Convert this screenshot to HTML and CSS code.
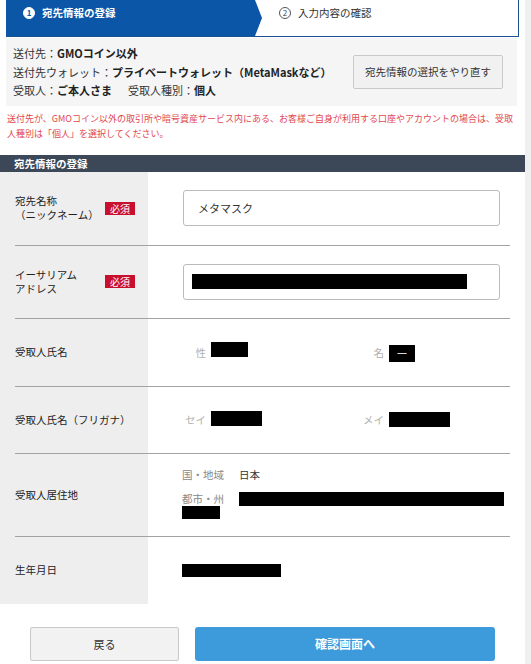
FILE: index.html
```html
<!DOCTYPE html>
<html lang="ja">
<head>
    <meta charset="UTF-8">
    <meta name="viewport" content="width=device-width, initial-scale=1.0">
    <title>宛先情報の登録</title>
    <link rel="stylesheet" href="styles.css">
</head>
<body>
<div class="page">

    <ol class="steps">
        <li class="step step--current"><span class="step-num">1</span>宛先情報の登録</li>
        <li class="step"><span class="step-num">2</span>入力内容の確認</li>
    </ol>

    <div class="summary">
        <div class="summary-list">
            <p>送付先：<b>GMOコイン以外</b></p>
            <p>送付先ウォレット：<b>プライベートウォレット（MetaMaskなど）</b></p>
            <p>受取人：<b>ご本人さま</b><span class="spacer"></span>受取人種別：<b>個人</b></p>
        </div>
        <button class="btn-reselect">宛先情報の選択をやり直す</button>
    </div>

    <p class="note">送付先が、GMOコイン以外の取引所や暗号資産サービス内にある、お客様ご自身が利用する口座やアカウントの場合は、受取<br>人種別は「個人」を選択してください。</p>

    <h2 class="section-title">宛先情報の登録</h2>

    <div class="form">
        <div class="row row--nickname">
            <div class="label">
                <span class="label-text">宛先名称<br>（ニックネーム）</span>
                <span class="badge">必須</span>
            </div>
            <div class="value">
                <input class="text-input" type="text" value="メタマスク">
            </div>
        </div>

        <div class="row row--address">
            <div class="label">
                <span class="label-text">イーサリアム<br>アドレス</span>
                <span class="badge">必須</span>
            </div>
            <div class="value">
                <div class="text-input"><span class="redact" style="width: 275px; height: 15px;"></span></div>
            </div>
        </div>

        <div class="row row--name">
            <div class="label">受取人氏名</div>
            <div class="value name-grid">
                <div class="name-field"><span class="name-key">性</span><span class="redact" style="width: 37px; height: 15px; margin-top: -5px;"></span></div>
                <div class="name-field"><span class="name-key">名</span><span class="redact redact--dash" style="width: 26px; height: 17px; margin-top: 3px;">一</span></div>
            </div>
        </div>

        <div class="row row--kana">
            <div class="label">受取人氏名（フリガナ）</div>
            <div class="value name-grid">
                <div class="name-field"><span class="name-key">セイ</span><span class="redact" style="width: 51px; height: 15px; margin-top: -3px;"></span></div>
                <div class="name-field"><span class="name-key">メイ</span><span class="redact" style="width: 61px; height: 15px; margin-top: -1px;"></span></div>
            </div>
        </div>

        <div class="row row--home">
            <div class="label">受取人居住地</div>
            <div class="value">
                <div class="address">
                    <div class="address-line"><span class="address-key">国・地域</span><span>日本</span></div>
                    <div class="address-line address-line--city"><span class="address-key">都市・州</span><span class="redact" style="width: 265px; height: 14px;"></span></div>
                    <span class="redact" style="width: 38px; height: 13px;"></span>
                </div>
            </div>
        </div>

        <div class="row row--birth">
            <div class="label">生年月日</div>
            <div class="value">
                <span class="redact" style="width: 99px; height: 13px;"></span>
            </div>
        </div>
    </div>

    <div class="actions">
        <button class="btn btn-back">戻る</button>
        <button class="btn btn-next">確認画面へ</button>
    </div>

</div>
</body>
</html>
```

FILE: styles.css
```css
body {
    margin: 0;
    background-color: #efefef;
    font-family: "Noto Sans CJK JP", "Noto Sans", sans-serif;
    color: #333;
}
p {
    margin: 0;
}
.page {
    width: 525px;
    min-height: 664px;
    background-color: #fff;
}

/* ステップ */
.steps {
    display: flex;
    list-style: none;
    margin: 0 0 0 6px;
    padding: 0;
    width: 513px;
    height: 37px;
    box-sizing: border-box;
    border-bottom: 1px solid #1b5291;
    border-right: 1px solid #1b5291;
}
.step {
    display: flex;
    align-items: center;
    height: 17px;
    padding: 4px 0 0 24px;
    font-size: 10.5px;
    line-height: 17px;
    color: #333;
}
.step--current {
    position: relative;
    width: 249px;
    height: 36px;
    align-items: flex-start;
    padding-left: 17px;
    box-sizing: border-box;
    background-color: #0b56a7;
    color: #fff;
    font-weight: bold;
}
.step--current::after {
    content: "";
    position: absolute;
    left: 100%;
    top: 0;
    border-left: 7px solid #0b56a7;
    border-top: 18px solid transparent;
    border-bottom: 18px solid transparent;
}
.step-num {
    display: inline-flex;
    justify-content: center;
    align-items: center;
    width: 12px;
    height: 12px;
    margin-right: 7px;
    border: 1px solid #555;
    border-radius: 50%;
    box-sizing: border-box;
    font-size: 8px;
    font-weight: normal;
    line-height: 1;
    color: #444;
}
.step--current .step-num {
    margin-top: 3px;
    background-color: #fff;
    border-color: #fff;
    color: #0b56a7;
    font-weight: bold;
}

/* 送付先サマリー */
.summary {
    display: flex;
    justify-content: space-between;
    align-items: center;
    margin: 1px 8px 0 6px;
    padding: 6px 14px 6px 7px;
    background-color: #f5f5f5;
}
.summary-list {
    font-size: 11px;
    line-height: 18.5px;
    color: #333;
}
.summary-list b {
    color: #222;
}
.spacer {
    display: inline-block;
    width: 16px;
}
.btn-reselect {
    width: 150px;
    height: 34px;
    padding: 0;
    background-color: #f1f1f1;
    border: 1px solid #c9c9c9;
    border-radius: 2px;
    font-family: inherit;
    font-size: 10.5px;
    color: #333;
}

.note {
    margin: 5px 6px 0 7px;
    font-size: 9px;
    line-height: 15px;
    color: #e2474e;
}

.section-title {
    margin: 14px 0 0;
    padding-left: 14px;
    height: 17px;
    background-color: #3c4858;
    color: #fff;
    font-size: 10.5px;
    line-height: 17px;
}

/* フォーム */
.form {
    background: linear-gradient(to right, #eeeeee 148px, #fff 148px);
}
.row {
    display: grid;
    grid-template-columns: 133px 1fr;
    align-items: center;
    margin: 0 15px;
    border-bottom: 1px solid #a3a3a3;
}
.row--nickname { height: 73px; }
.row--address { height: 72px; }
.row--name { height: 67px; }
.row--kana { height: 66px; }
.row--home { height: 82px; }
.row--birth {
    height: 67px;
    border-bottom: none;
}
.label {
    display: flex;
    align-items: center;
    font-size: 10.5px;
    line-height: 14px;
    color: #222;
}
.label-text {
    width: 90px;
}
.badge {
    width: 30px;
    height: 13px;
    background-color: #c8102e;
    color: #fff;
    font-size: 10px;
    line-height: 13px;
    text-align: center;
}
.value {
    display: flex;
    align-items: center;
    padding-left: 34px;
    font-size: 10.5px;
}
.text-input {
    display: flex;
    align-items: center;
    width: 317px;
    height: 36px;
    margin-left: 1px;
    padding: 0 0 0 8px;
    box-sizing: border-box;
    border: 1px solid #bbb;
    border-radius: 3px;
    font-family: inherit;
    font-size: 11px;
    color: #333;
    background-color: #fff;
}
input.text-input {
    padding-left: 14px;
}

.redact {
    display: inline-block;
    background-color: #000;
}
.redact--dash {
    color: #fff;
    font-size: 10px;
    line-height: 17px;
    text-align: center;
}

.name-grid {
    display: grid;
    grid-template-columns: 178px 1fr;
}
.name-field {
    display: flex;
    align-items: center;
}
.name-key {
    width: 24px;
    margin-right: 5px;
    text-align: right;
    color: #b0b0b0;
}

.address {
    padding-bottom: 5px;
}
.address-line {
    display: flex;
    align-items: center;
    height: 18px;
    color: #333;
}
.address-line--city {
    height: 14px;
    margin-top: 8px;
}
.address-key {
    width: 57px;
    color: #888;
}
.address > .redact {
    display: block;
}

/* ボタン */
.actions {
    display: flex;
    padding: 23px 0 4px 30px;
}
.btn {
    height: 34px;
    padding: 0;
    border-radius: 2px;
    font-family: inherit;
    cursor: pointer;
}
.btn-back {
    width: 149px;
    background-color: #f2f2f2;
    border: 1px solid #c8c8c8;
    font-size: 11px;
    color: #333;
}
.btn-next {
    width: 300px;
    margin-left: 16px;
    background-color: #3d9bdb;
    border: none;
    border-radius: 3px;
    color: #fff;
    font-size: 12px;
    font-weight: bold;
}
```
